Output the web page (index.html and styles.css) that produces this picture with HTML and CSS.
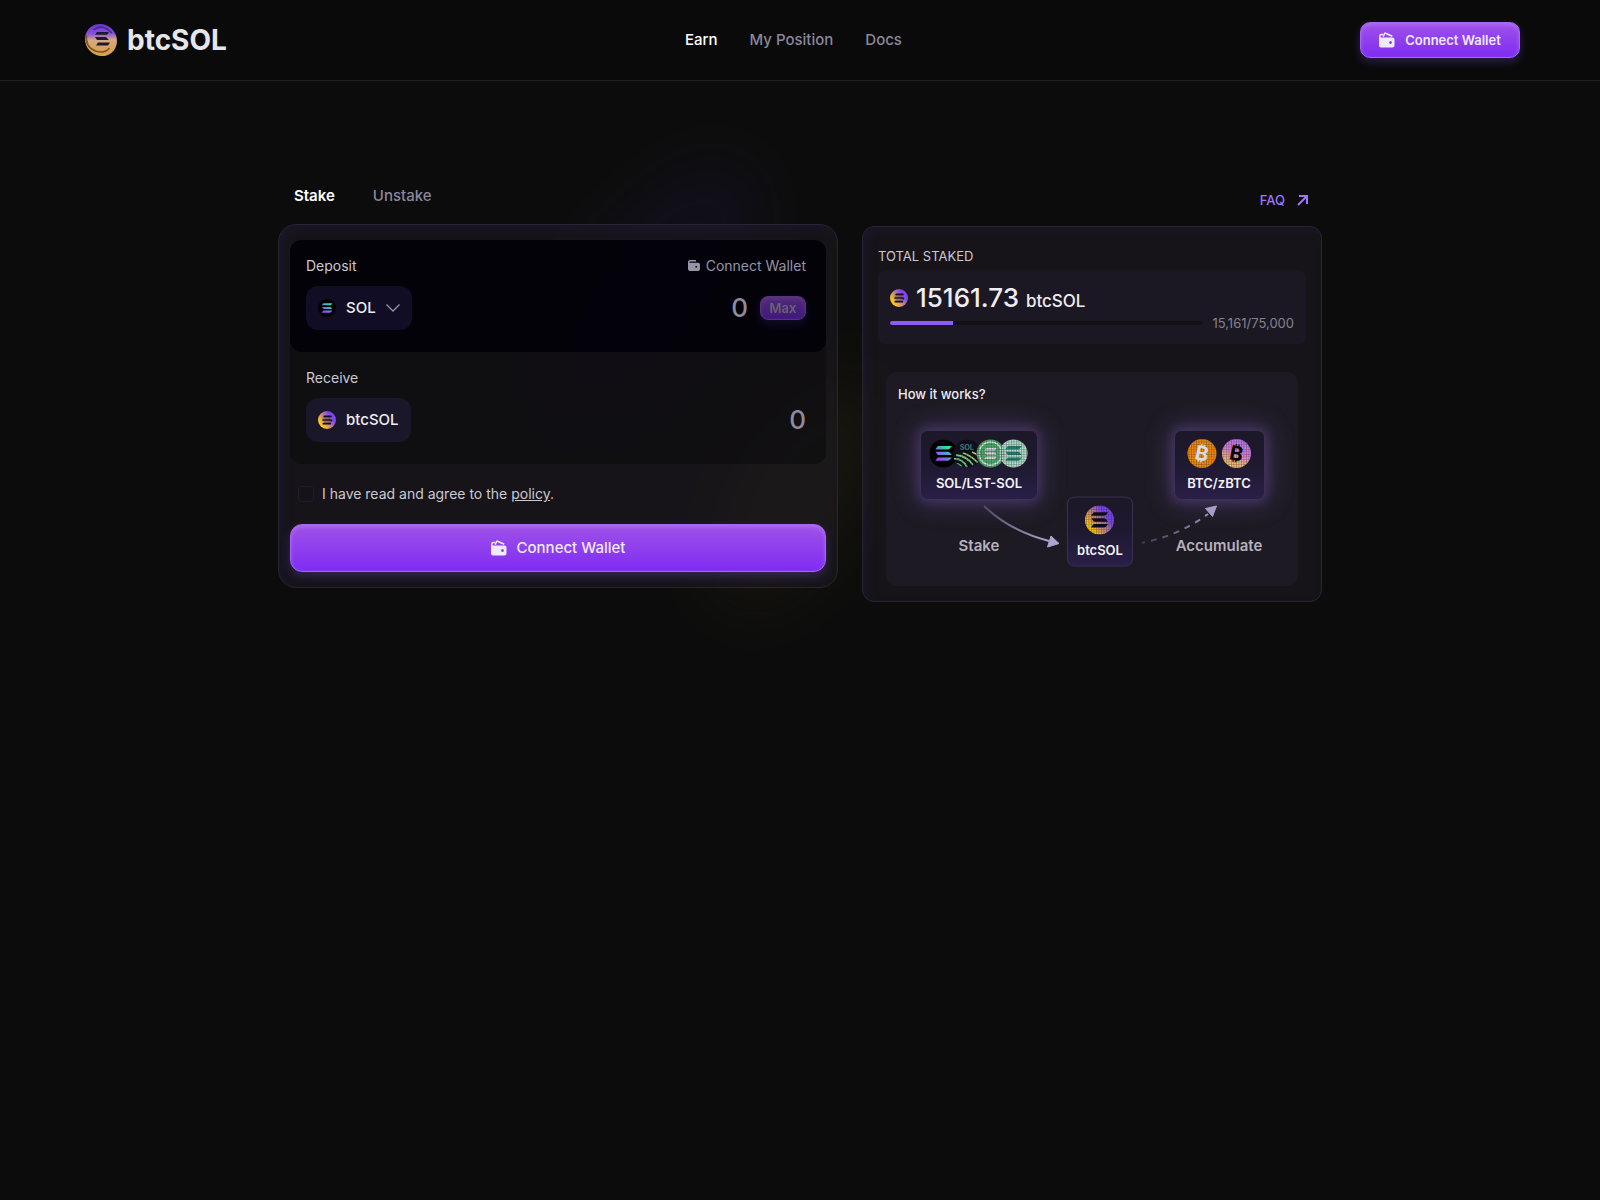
FILE: index.html
```
<!DOCTYPE html>
<html lang="en">
<head>
    <meta charset="UTF-8">
    <meta name="viewport" content="width=device-width, initial-scale=1.0">
    <title>btcSOL</title>
    <link rel="stylesheet" href="styles.css">
</head>
<body>
    <!-- shared icons -->
    <svg class="sprite" width="0" height="0" aria-hidden="true">
        <defs>
            <linearGradient id="coinFill" x1="0.1" y1="0.8" x2="0.9" y2="0.2">
                <stop offset="0.1" stop-color="#ffc61a"/>
                <stop offset="0.5" stop-color="#b97f92"/>
                <stop offset="0.8" stop-color="#7d45f0"/>
            </linearGradient>
            <linearGradient id="solFill" gradientUnits="userSpaceOnUse" x1="10" y1="22" x2="22" y2="9">
                <stop offset="0" stop-color="#9945ff"/>
                <stop offset="0.5" stop-color="#5f8fd8"/>
                <stop offset="1" stop-color="#19f0a0"/>
            </linearGradient>
            <linearGradient id="logoFill" x1="0.2" y1="0.9" x2="0.8" y2="0.1">
                <stop offset="0.1" stop-color="#d9a04e"/>
                <stop offset="0.5" stop-color="#d6a982"/>
                <stop offset="0.7" stop-color="#8451e0"/>
                <stop offset="1" stop-color="#6a35cf"/>
            </linearGradient>
        </defs>
        <symbol id="bars" viewBox="0 0 32 32">
            <path d="M9.500 7.500h16l-2.500 3q-.8.800-2 .800H6.500z"/>
            <path d="M7 14h14q1.200 0 2 .8l2.500 3H11q-1.200 0-2-.8z"/>
            <path d="M9.500 20.500h16l-2.500 3q-.8.800-2 .800H6.500z"/>
        </symbol>
        <symbol id="btcsol" viewBox="0 0 32 32">
            <circle cx="16" cy="16" r="16" fill="url(#coinFill)"/>
            <g fill="none" stroke="#120d1c" stroke-width="3" stroke-linecap="round">
                <path d="M11 9.500h12M9 16h13q1.500 0 2 1M9.500 22.500h12.500"/>
            </g>
            <path d="M8 12.500h14M10 19.500h14" fill="none" stroke="#120d1c" stroke-opacity=".6" stroke-width="1.300"/>
        </symbol>
        <symbol id="btcsol-large" viewBox="0 0 32 32">
            <circle cx="16" cy="16" r="16" fill="url(#coinFill)"/>
            <use href="#bars" width="32" height="32" fill="#0e0a14"/>
        </symbol>
        <symbol id="sol" viewBox="0 0 32 32">
            <circle cx="16" cy="16" r="16" fill="#000"/>
            <use href="#bars" width="32" height="32" fill="url(#solFill)"/>
        </symbol>
        <symbol id="wallet" viewBox="0 0 16 16">
            <path d="M.8 6V4.200Q.8 2.600 2.400 2.600H4" fill="none" stroke="currentColor" stroke-width="1.500"/>
            <path d="M4.200 4.600 5.600 1.500q.3-.6.9-.3l6.800 3" fill="none" stroke="currentColor" stroke-width="1.500"/>
            <path fill="currentColor" fill-rule="evenodd" d="M0 4.500q.8.900 2 .9h11.500Q15.500 5.400 15.500 7.400v6q0 2-2 2H2q-2 0-2-2zM11.500 9.100a1.400 1.400 0 1 0 .01 0z"/>
        </symbol>
        <symbol id="wallet-small" viewBox="0 0 12 12">
            <path fill="currentColor" fill-rule="evenodd" d="M2 0h6v1.500H2q-.6 0-.6.600T2 2.700h8q2 0 2 2V9q0 2-2 2H2Q0 11 0 9V2q0-2 2-2zM7.400 6v1.600h1.700V6z"/>
        </symbol>
    </svg>

    <header class="header">
        <a class="logo" href="#">
            <svg class="logo-coin" viewBox="0 0 34 34" aria-hidden="true">
                <ellipse cx="17" cy="17" rx="15.500" ry="16.500" fill="url(#logoFill)" transform="rotate(-40 17 17)"/>
                <path d="M2.500 12q-1.500 12 9 16 9 3 14-3" fill="none" stroke="#7d521e" stroke-width="1.500"/>
                <path d="M9 7Q18 0 28 10" fill="none" stroke="#4a2890" stroke-width="1.500"/>
                <path d="M13 9h12l-2 2.800H11zM11 14h11l3 3H13zM14 19.500h12l-2 3H12z" fill="#1d1a30"/>
            </svg>
            <span>btcSOL</span>
        </a>
        <nav class="nav">
            <a class="active" href="#">Earn</a>
            <a href="#">My Position</a>
            <a href="#">Docs</a>
        </nav>
        <button class="btn btn-header" type="button">
            <svg width="16" height="16" aria-hidden="true"><use href="#wallet"/></svg>
            Connect Wallet
        </button>
    </header>

    <main class="main">
        <section class="stake">
            <div class="tabs">
                <button class="tab active" type="button">Stake</button>
                <button class="tab" type="button">Unstake</button>
            </div>
            <form class="card stake-card">
                <div class="fields">
                    <div class="field deposit">
                        <div class="field-head">
                            <label for="deposit">Deposit</label>
                            <button class="link-wallet" type="button">
                                <svg width="12" height="12" aria-hidden="true"><use href="#wallet-small"/></svg>
                                Connect Wallet
                            </button>
                        </div>
                        <div class="field-row">
                            <button class="token" type="button">
                                <svg width="18" height="18" aria-hidden="true"><use href="#sol"/></svg>
                                SOL
                                <svg class="chevron" viewBox="0 0 14 8" aria-hidden="true"><path d="M.5.500 7 7 13.500.500"/></svg>
                            </button>
                            <input class="amount" id="deposit" type="text" placeholder="0">
                            <button class="btn btn-max" type="button" disabled>Max</button>
                        </div>
                    </div>
                    <div class="field">
                        <div class="field-head">
                            <label for="receive">Receive</label>
                        </div>
                        <div class="field-row">
                            <div class="token">
                                <svg width="18" height="18" aria-hidden="true"><use href="#btcsol"/></svg>
                                btcSOL
                            </div>
                            <input class="amount" id="receive" type="text" placeholder="0" readonly>
                        </div>
                    </div>
                </div>
                <div class="agree">
                    <input type="checkbox" id="agree">
                    <label for="agree">I have read and agree to the <a href="#">policy</a>.</label>
                </div>
                <button class="btn btn-main" type="button">
                    <svg width="16" height="16" aria-hidden="true"><use href="#wallet"/></svg>
                    Connect Wallet
                </button>
            </form>
        </section>

        <section class="stats">
            <a class="faq" href="#">
                FAQ
                <svg width="12" height="12" viewBox="0 0 12 12" aria-hidden="true"><path d="M1 11 10 2M2 2h8v8"/></svg>
            </a>
            <div class="card stats-card">
                <h2>TOTAL STAKED</h2>
                <div class="total">
                    <div class="total-value">
                        <svg width="18" height="18" aria-hidden="true"><use href="#btcsol"/></svg>
                        <p>15161.73 <small>btcSOL</small></p>
                    </div>
                    <div class="progress-row">
                        <div class="progress"><div class="progress-fill" style="width: 20.2%"></div></div>
                        <span>15,161/75,000</span>
                    </div>
                </div>
                <div class="how">
                    <h3>How it works?</h3>
                    <svg class="diagram" viewBox="0 0 412 182" role="img" aria-label="Stake SOL, get btcSOL, accumulate BTC">
                        <defs>
                            <linearGradient id="nodeFill" x1="0" y1="0" x2="0" y2="1">
                                <stop offset="0" stop-color="#1c1827"/>
                                <stop offset="0.5" stop-color="#1e1930"/>
                                <stop offset="1" stop-color="#2a1f48"/>
                            </linearGradient>
                            <linearGradient id="zbtcFill" x1="0.7" y1="0" x2="0.3" y2="1">
                                <stop offset="0" stop-color="#b07cf0"/>
                                <stop offset="0.45" stop-color="#e07fd6"/>
                                <stop offset="0.8" stop-color="#f0bd78"/>
                            </linearGradient>
                            <linearGradient id="stripeFill" x1="0" y1="1" x2="1" y2="0">
                                <stop offset="0" stop-color="#3ad0a0"/>
                                <stop offset="1" stop-color="#c8e060"/>
                            </linearGradient>
                            <linearGradient id="arrowFill" gradientUnits="userSpaceOnUse" x1="96" y1="102" x2="165" y2="140">
                                <stop offset="0" stop-color="#4c4660"/>
                                <stop offset="1" stop-color="#b0a4d0"/>
                            </linearGradient>
                            <linearGradient id="dashFill" gradientUnits="userSpaceOnUse" x1="254" y1="139" x2="324" y2="110">
                                <stop offset="0" stop-color="#3a3450"/>
                                <stop offset="1" stop-color="#9d92ba"/>
                            </linearGradient>
                            <pattern id="mesh" width="2.500" height="2.500" patternUnits="userSpaceOnUse">
                                <path d="M0 0h2.500M0 0v2.500" stroke="#14101c" stroke-opacity=".5" stroke-width="1"/>
                            </pattern>
                            <filter id="glow" x="-50%" y="-60%" width="200%" height="220%">
                                <feGaussianBlur stdDeviation="13"/>
                            </filter>
                            <filter id="glowSmall" x="-30%" y="-30%" width="160%" height="160%">
                                <feGaussianBlur stdDeviation="6"/>
                            </filter>
                            <clipPath id="coinClip"><circle cx="81" cy="49.500" r="14"/></clipPath>
                        </defs>

                        <g fill="#6a50a0">
                            <rect x="31" y="22" width="124" height="78" rx="10" opacity=".4" filter="url(#glow)"/>
                            <rect x="284" y="22" width="99" height="78" rx="10" opacity=".4" filter="url(#glow)"/>
                            <rect x="33" y="24" width="120" height="74" rx="7" opacity=".35" filter="url(#glowSmall)"/>
                            <rect x="286" y="24" width="95" height="74" rx="7" opacity=".35" filter="url(#glowSmall)"/>
                        </g>
                        <g fill="url(#nodeFill)" stroke="#3a3150">
                            <rect x="34.500" y="26.500" width="117" height="69" rx="7"/>
                            <rect x="288.500" y="26.500" width="90" height="69" rx="7"/>
                            <rect x="181.500" y="93" width="65" height="69" rx="7"/>
                        </g>

                        <use href="#sol" x="43.500" y="35.500" width="28" height="28"/>
                        <g clip-path="url(#coinClip)">
                            <circle cx="81" cy="49.500" r="14" fill="#100e1a"/>
                            <g fill="none" stroke="url(#stripeFill)" stroke-width="1.800">
                                <path d="M68 55q8-1 13 8M70 51q11 1 17 10M77 49q9 3 16 11M70 60q4 0 6 4M86 48q5 2 9 6"/>
                            </g>
                            <text class="coin-text" x="81" y="46">SOL</text>
                        </g>
                        <circle cx="104.500" cy="49.500" r="14" fill="#51b06f"/>
                        <circle cx="104.500" cy="49.500" r="11.500" fill="none" stroke="#d9efdc" stroke-width="1.500"/>
                        <use href="#bars" x="94" y="39" width="21" height="21" fill="#e4dbe8"/>
                        <circle cx="127.500" cy="49.500" r="14" fill="#b4dcc8"/>
                        <use href="#bars" x="113.500" y="35.500" width="28" height="28" fill="#268377"/>
                        <circle cx="316" cy="49.500" r="14.500" fill="#f08c0c"/>
                        <circle cx="350.500" cy="49.500" r="14.500" fill="url(#zbtcFill)"/>
                        <use href="#btcsol-large" x="199" y="101.500" width="29" height="29"/>
                        <g fill="url(#mesh)">
                            <circle cx="81" cy="49.500" r="14"/>
                            <circle cx="104.500" cy="49.500" r="14"/>
                            <circle cx="127.500" cy="49.500" r="14"/>
                            <circle cx="316" cy="49.500" r="14.500"/>
                            <circle cx="350.500" cy="49.500" r="14.500"/>
                            <circle cx="213.500" cy="116" r="14.500"/>
                        </g>
                        <text class="bitcoin" x="316" y="56.500" fill="#dcdae6" transform="rotate(12 316 49.500)">₿</text>
                        <text class="bitcoin" x="350.500" y="56.500" fill="#000" transform="rotate(12 350.500 49.500)">₿</text>

                        <path d="M98 102q26 25 65 35" fill="none" stroke="url(#arrowFill)" stroke-width="2"/>
                        <path d="m165 132 8 7.500-11.500 3.500z" fill="#b0a4d0" stroke="#b0a4d0" stroke-linejoin="round"/>
                        <path d="M256 139q38-8 66-29" fill="none" stroke="url(#dashFill)" stroke-width="2" stroke-dasharray="6 6" stroke-dashoffset="3"/>
                        <path d="m319.500 104.500 11-2.500-4 10.500z" fill="#a99dc8" stroke="#a99dc8" stroke-linejoin="round"/>

                        <g class="node-text">
                            <text x="93" y="84">SOL/LST-SOL</text>
                            <text x="333" y="84">BTC/zBTC</text>
                            <text x="214" y="151">btcSOL</text>
                        </g>
                        <g class="step-text">
                            <text x="93" y="147">Stake</text>
                            <text x="333" y="147">Accumulate</text>
                        </g>
                    </svg>
                </div>
            </div>
        </section>
    </main>
</body>
</html>
```

FILE: styles.css
```
* {
    margin: 0;
    padding: 0;
    box-sizing: border-box;
}

body {
    min-height: 100vh;
    background-color: #0c0c0c;
    color: #eeedf2;
    font-family: Inter, "Liberation Sans", sans-serif;
    font-size: 14px;
    line-height: 20px;
}

button,
input {
    font: inherit;
    color: inherit;
    background: none;
    border: 0;
}

button {
    cursor: pointer;
}

a {
    color: inherit;
    text-decoration: none;
}

.sprite {
    position: absolute;
}

/* header */
.header {
    display: flex;
    justify-content: space-between;
    align-items: center;
    height: 81px;
    padding: 0 80px;
    background-color: #0a0a0a;
    border-bottom: 1px solid #222224;
}

.logo {
    display: flex;
    align-items: center;
    gap: 9px;
    padding-left: 4px;
    color: #e6e6ea;
    font-size: 28px;
    font-weight: 700;
}

.logo-coin {
    width: 34px;
    height: 34px;
}

.nav {
    display: flex;
    gap: 32px;
    color: #8b879c;
    font-size: 15px;
    font-weight: 500;
}

.nav .active {
    color: #fff;
}

.btn {
    display: flex;
    justify-content: center;
    align-items: center;
    gap: 10px;
    color: #f0eafa;
    font-weight: 500;
    background: linear-gradient(#9f52e8, #7f2cf3);
    border: 1px solid #a566f5;
    border-radius: 12px;
    box-shadow: 0 4px 10px rgba(110, 80, 220, 0.3), inset 0 2px 4px rgba(220, 180, 255, 0.3);
}

.btn-header {
    width: 160px;
    height: 36px;
    border-radius: 10px;
    font-size: 13px;
    font-weight: 600;
}

/* page */
.main {
    position: relative;
    z-index: 0;
    display: grid;
    grid-template-columns: 560fr 460fr;
    align-items: start;
    gap: 24px;
    max-width: 1044px;
    margin: 0 auto;
    padding-top: 103px;
}

.main::before,
.main::after {
    content: "";
    position: absolute;
    z-index: -1;
    border-radius: 50%;
    filter: blur(32px);
}

.main::before {
    left: 305px;
    top: 55px;
    width: 140px;
    height: 310px;
    background-color: rgba(50, 35, 110, 0.15);
    transform: rotate(36deg);
}

.main::after {
    left: 460px;
    top: 280px;
    width: 120px;
    height: 260px;
    background-color: rgba(85, 78, 20, 0.14);
    transform: rotate(32deg);
}

.stake,
.stats {
    min-width: 0;
}

.card {
    background-color: rgba(32, 28, 36, 0.55);
    border: 1px solid #28252f;
    box-shadow: inset 5px 5px 10px -2px rgba(32, 24, 62, 0.5);
}

.tabs {
    display: flex;
    gap: 38px;
    padding: 0 16px 16px;
}

.tab {
    color: #8b879c;
    font-size: 15px;
    font-weight: 500;
    line-height: 24px;
}

.tab.active {
    color: #fff;
    font-weight: 600;
}

.stake-card {
    padding: 15px 11px;
    border-radius: 18px;
}

.fields {
    background-color: rgba(8, 8, 10, 0.5);
    border-radius: 12px;
}

.field {
    height: 112px;
    padding: 16px 20px 16px 16px;
}

.deposit {
    background-color: rgba(0, 0, 8, 0.8);
    border-radius: 12px;
}

.field-head,
.field-row {
    display: flex;
    align-items: center;
}

.field-head {
    justify-content: space-between;
    margin-bottom: 10px;
    color: #cbc9d2;
}

.link-wallet {
    display: flex;
    align-items: center;
    gap: 6px;
    color: #9793a8;
}

.token {
    display: flex;
    align-items: center;
    flex-shrink: 0;
    gap: 10px;
    height: 44px;
    padding: 0 12px;
    color: #eeedf2;
    font-size: 15px;
    font-weight: 500;
    background-color: #1b172b;
    border-radius: 12px;
}

.deposit .token {
    background-color: #100d24;
}

.chevron {
    width: 14px;
    height: 8px;
    fill: none;
    stroke: #9793a8;
    stroke-width: 1.3;
}

.amount {
    flex: 1;
    min-width: 0;
    color: #8f8b9f;
    font-size: 26px;
    font-weight: 500;
    line-height: 32px;
    text-align: right;
}

.amount::placeholder {
    color: #8f8b9f;
}

.btn-max {
    width: 46px;
    height: 24px;
    margin-left: 12px;
    border-radius: 8px;
    font-size: 13px;
    font-weight: 600;
    color: #c9c5cc;
    opacity: 0.5;
}

.agree {
    display: flex;
    align-items: center;
    gap: 8px;
    margin: 20px 8px;
    color: #cbc9d2;
}

.agree input {
    appearance: none;
    width: 16px;
    height: 16px;
    background-color: #15121c;
    border: 1px solid #201d28;
    border-radius: 4px;
}

.agree a {
    text-decoration: underline;
}

.btn-main {
    width: 100%;
    height: 48px;
    font-size: 15px;
}

/* right column */
.faq {
    display: flex;
    align-items: center;
    justify-content: flex-end;
    gap: 12px;
    padding: 6px 13px 16px 0;
    color: #9f75ff;
    font-size: 13px;
    font-weight: 500;
}

.faq path {
    fill: none;
    stroke: currentColor;
    stroke-width: 2;
}

.stats-card {
    padding: 15px;
    border-radius: 12px;
}

.stats-card h2 {
    color: #cbc9d2;
    font-size: 13px;
    font-weight: 400;
    line-height: 28px;
}

.total {
    padding: 12px;
    background-color: #1c1823;
    border-radius: 8px;
}

.total-value {
    display: flex;
    align-items: center;
    gap: 8px;
    font-size: 26px;
    font-weight: 500;
    line-height: 32px;
}

.total-value small {
    font-size: 17px;
    line-height: 20px;
}

.progress-row {
    display: flex;
    align-items: center;
    gap: 9px;
    color: #85818f;
    font-size: 13px;
    line-height: 18px;
}

.progress {
    flex: 1;
    height: 4px;
    overflow: hidden;
    background-color: #131018;
    border-radius: 2px;
}

.progress-fill {
    height: 4px;
    background-color: #8b5cf6;
}

.how {
    margin: 28px 8px 0;
    padding-top: 12px;
    background-color: #1d1a23;
    border-radius: 12px;
}

.how h3 {
    padding-left: 12px;
    font-size: 13px;
    font-weight: 500;
}

.diagram {
    display: block;
    width: 100%;
}

.diagram text {
    text-anchor: middle;
    font-weight: 600;
}

.node-text {
    fill: #f4f3f7;
    font-size: 13px;
}

.step-text {
    fill: #b5b1bd;
    font-size: 15px;
}

.coin-text {
    fill: #3ea596;
    font-size: 7px;
}

.diagram .bitcoin {
    font-size: 20px;
    font-weight: 700;
}

@media (max-width: 1080px) {
    .header {
        padding: 0 20px;
    }

    .main {
        grid-template-columns: 1fr;
        padding: 40px 20px;
    }
}
```
